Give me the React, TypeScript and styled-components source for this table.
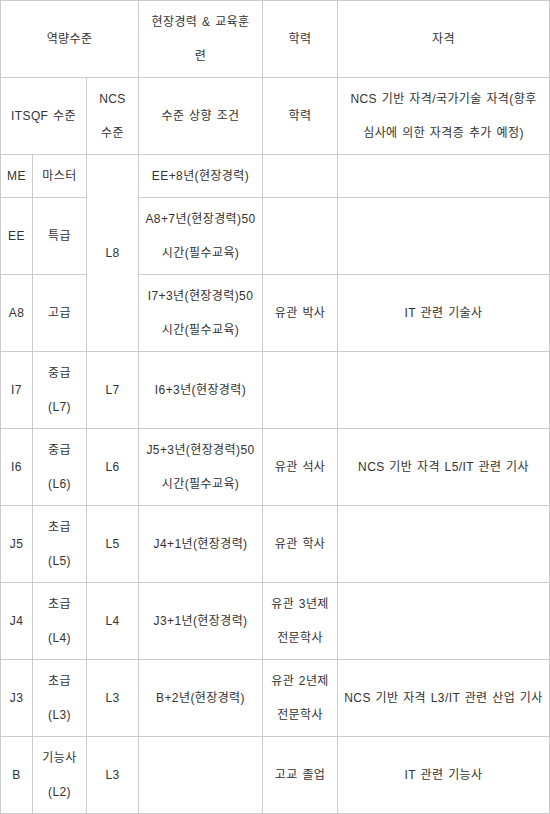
import React from "react";
import styled, { createGlobalStyle } from "styled-components";

const GlobalStyle = createGlobalStyle`
  html, body {
    margin: 0;
    padding: 0;
    background: #ffffff;
  }
  body {
    font-family: "Liberation Sans", "Noto Sans CJK KR", sans-serif;
  }
`;

const Table = styled.table`
  width: 549px;
  table-layout: fixed;
  border-collapse: collapse;
  font-family: "Liberation Sans", "Noto Sans CJK KR", sans-serif;
  font-size: 12px;
  color: #333333;
  background: #ffffff;
`;

const Cell = styled.td`
  border: 1px solid #cccccc;
  padding: 4px 1px;
  line-height: 34px;
  text-align: center;
  vertical-align: middle;
  white-space: nowrap;
  overflow: hidden;
  letter-spacing: 0.4px;
  word-spacing: 1px;
`;

type Row = {
  cells: { text?: string[]; colSpan?: number; rowSpan?: number }[];
};

const t = (s: string) => s.split("|");

const rows: Row[] = [
  {
    cells: [
      { text: t("역량수준"), colSpan: 3 },
      { text: t("현장경력 & 교육훈|련") },
      { text: t("학력") },
      { text: t("자격") },
    ],
  },
  {
    cells: [
      { text: t("ITSQF 수준"), colSpan: 2 },
      { text: t("NCS|수준") },
      { text: t("수준 상향 조건") },
      { text: t("학력") },
      { text: t("NCS 기반 자격/국가기술 자격(향후|심사에 의한 자격증 추가 예정)") },
    ],
  },
  {
    cells: [
      { text: t("ME") },
      { text: t("마스터") },
      { text: t("L8"), rowSpan: 3 },
      { text: t("EE+8년(현장경력)") },
      {},
      {},
    ],
  },
  {
    cells: [
      { text: t("EE") },
      { text: t("특급") },
      { text: t("A8+7년(현장경력)50|시간(필수교육)") },
      {},
      {},
    ],
  },
  {
    cells: [
      { text: t("A8") },
      { text: t("고급") },
      { text: t("I7+3년(현장경력)50|시간(필수교육)") },
      { text: t("유관 박사") },
      { text: t("IT 관련 기술사") },
    ],
  },
  {
    cells: [
      { text: t("I7") },
      { text: t("중급|(L7)") },
      { text: t("L7") },
      { text: t("I6+3년(현장경력)") },
      {},
      {},
    ],
  },
  {
    cells: [
      { text: t("I6") },
      { text: t("중급|(L6)") },
      { text: t("L6") },
      { text: t("J5+3년(현장경력)50|시간(필수교육)") },
      { text: t("유관 석사") },
      { text: t("NCS 기반 자격 L5/IT 관련 기사") },
    ],
  },
  {
    cells: [
      { text: t("J5") },
      { text: t("초급|(L5)") },
      { text: t("L5") },
      { text: t("J4+1년(현장경력)") },
      { text: t("유관 학사") },
      {},
    ],
  },
  {
    cells: [
      { text: t("J4") },
      { text: t("초급|(L4)") },
      { text: t("L4") },
      { text: t("J3+1년(현장경력)") },
      { text: t("유관 3년제|전문학사") },
      {},
    ],
  },
  {
    cells: [
      { text: t("J3") },
      { text: t("초급|(L3)") },
      { text: t("L3") },
      { text: t("B+2년(현장경력)") },
      { text: t("유관 2년제|전문학사") },
      { text: t("NCS 기반 자격 L3/IT 관련 산업 기사") },
    ],
  },
  {
    cells: [
      { text: t("B") },
      { text: t("기능사|(L2)") },
      { text: t("L3") },
      {},
      { text: t("고교 졸업") },
      { text: t("IT 관련 기능사") },
    ],
  },
];

const colWidths = [32, 54, 52, 124, 75, 212];

export default function App() {
  return (
    <>
      <GlobalStyle />
      <Table>
        <colgroup>
          {colWidths.map((w, i) => (
            <col key={i} style={{ width: w }} />
          ))}
        </colgroup>
        <tbody>
          {rows.map((row, ri) => (
            <tr key={ri}>
              {row.cells.map((c, ci) => (
                <Cell key={ci} colSpan={c.colSpan} rowSpan={c.rowSpan}>
                  {c.text
                    ? c.text.map((line, li) => (
                        <React.Fragment key={li}>
                          {li > 0 && <br />}
                          {line}
                        </React.Fragment>
                      ))
                    : "\u00a0"}
                </Cell>
              ))}
            </tr>
          ))}
        </tbody>
      </Table>
    </>
  );
}
